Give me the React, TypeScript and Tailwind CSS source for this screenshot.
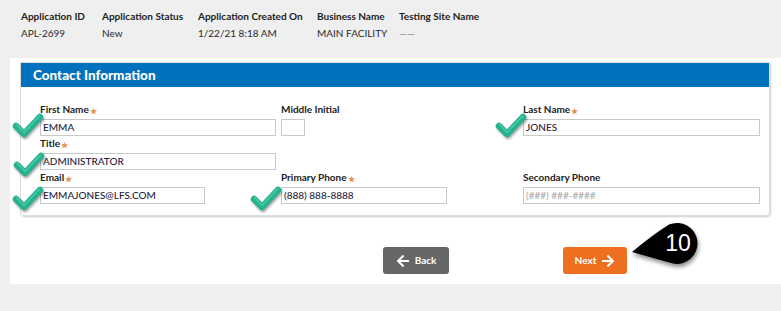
import React from "react";
import { FaArrowLeft, FaArrowRight } from "react-icons/fa";

const font = { fontFamily: "Lato, 'Noto Sans', sans-serif" };

function Check({ className }: { className: string }) {
  return (
    <svg
      width="32"
      height="26"
      viewBox="0 0 32 26"
      className={"absolute " + className}
      style={{ filter: "drop-shadow(1px 2px 1.2px rgba(0,0,0,0.35))" }}
    >
      <polyline
        points="4,13 12,21 28,4"
        fill="none"
        stroke="#26b28f"
        strokeWidth="6.5"
        strokeLinecap="round"
        strokeLinejoin="round"
      />
      <polyline
        points="4.5,11.6 12,19.3 27.5,3.1"
        fill="none"
        stroke="#4bcaa7"
        strokeWidth="1.5"
        strokeLinecap="round"
        strokeLinejoin="round"
      />
    </svg>
  );
}

function Star() {
  return <span className="text-[8px] text-[#e39151] ml-[1px] relative top-[1px]">★</span>;
}

function Label({ text, req }: { text: string; req?: boolean }) {
  return (
    <div className="h-[13px] leading-[13px] text-[10px] font-bold text-[#222222] whitespace-nowrap">
      {text}
      {req && <Star />}
    </div>
  );
}

function Box({ w, value, placeholder, check }: { w: string; value?: string; placeholder?: string; check?: string }) {
  return (
    <div className={"relative mt-[3px] h-[17px] border border-[#c9c9c9] bg-white px-[2px] flex items-center text-[10px] " + w}>
      {value ? (
        <span className="text-[#26223f] font-medium">{value}</span>
      ) : placeholder ? (
        <span className="text-[#a8a8a8]">{placeholder}</span>
      ) : null}
      {check && <Check className={check} />}
    </div>
  );
}

export default function App() {
  const info = [
    ["Application ID", "APL-2699", "w-[81px]"],
    ["Application Status", "New", "w-[96px]"],
    ["Application Created On", "1/22/21 8:18 AM", "w-[119px]"],
    ["Business Name", "MAIN FACILITY", "w-[82px]"],
    ["Testing Site Name", "——", "w-[100px]"],
  ];
  return (
    <div className="w-[781px] h-[311px] bg-[#efefef] overflow-hidden" style={font}>
      <div className="flex pl-[21px] pt-[10px] h-[58px]">
        {info.map(([l, v, w]) => (
          <div key={l} className={"flex flex-col " + w}>
            <div className="text-[10px] font-bold text-[#222222] leading-[12px]">{l}</div>
            <div className={"text-[10px] leading-[12px] mt-[5px] " + (v === "——" ? "text-[#888888]" : "text-[#2a2a2a]")}>{v}</div>
          </div>
        ))}
      </div>
      <div className="ml-[10px] h-[226px] bg-white pt-[4px]">
        <div className="ml-[10px] mr-[11px] border border-[#dcdcdc] rounded-b-[4px] shadow-[1px_1px_2px_rgba(0,0,0,0.2)]">
          <div className="h-[24px] bg-[#0071bc] pl-[12px] flex items-center text-white font-black text-[13.5px]">
            Contact Information
          </div>
          <div className="grid grid-cols-[241px_242px_1fr] pl-[19px] pr-[10px] pt-[16px] pb-[11px]">
            <div>
              <Label text="First Name" req />
              <Box w="w-[236px]" value="EMMA" check="left-[-29px] top-[-7px]" />
            </div>
            <div>
              <Label text="Middle Initial" />
              <Box w="w-[24px]" />
            </div>
            <div>
              <Label text="Last Name" req />
              <Box w="w-[237px]" value="JONES" check="left-[-29px] top-[-7px]" />
            </div>
            <div className="col-span-3 mt-[1px]">
              <Label text="Title" req />
              <Box w="w-[236px]" value="ADMINISTRATOR" check="left-[-28px] top-[-2px]" />
            </div>
            <div className="mt-[1px]">
              <Label text="Email" req />
              <Box w="w-[165px]" value="EMMAJONES@LFS.COM" check="left-[-29px] top-[-2px]" />
            </div>
            <div className="mt-[1px]">
              <Label text="Primary Phone" req />
              <Box w="w-[166px]" value="(888) 888-8888" check="left-[-32px] top-[-2px]" />
            </div>
            <div className="mt-[1px]">
              <Label text="Secondary Phone" />
              <Box w="w-[237px]" placeholder="(###) ###-####" />
            </div>
          </div>
        </div>
        <div className="flex mt-[31px]">
          <button className="ml-[373px] w-[66px] h-[27px] rounded-[3px] bg-[#666666] text-white text-[10px] font-bold flex items-center justify-center gap-[5px]">
            <FaArrowLeft size={14} />
            <span>Back</span>
          </button>
          <div className="relative ml-[114px]">
            <button className="w-[64px] h-[27px] rounded-[3px] bg-[#ee6f1f] text-white text-[10px] font-bold flex items-center justify-center gap-[5px]">
              <span>Next</span>
              <FaArrowRight size={14} />
            </button>
            <div className="absolute left-[64px] top-[-27px] w-[80px] h-[52px]">
              <svg
                width="80"
                height="52"
                viewBox="626 220 80 52"
                style={{ filter: "drop-shadow(1px 3px 2px rgba(0,0,0,0.45))" }}
              >
                <path
                  d="M 631 252 Q 650 236 668 224.5 A 20.5 20.5 0 1 1 672 263.5 Q 652 258 631 252 Z"
                  fill="#000"
                />
              </svg>
              <div
                className="absolute left-[30px] top-[9px] w-[42px] text-center text-white text-[23px] leading-[28px]"
                style={{ fontFamily: "'Liberation Sans', Arial, sans-serif" }}
              >
                10
              </div>
            </div>
          </div>
        </div>
      </div>
    </div>
  );
}
